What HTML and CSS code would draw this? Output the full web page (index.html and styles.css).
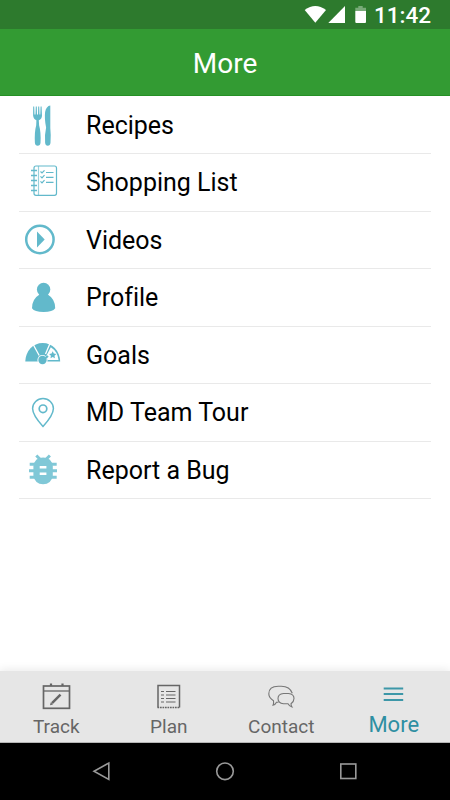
FILE: index.html
```html
<!DOCTYPE html>
<html lang="en">
<head>
<meta charset="utf-8">
<title>More</title>
<link rel="stylesheet" href="styles.css">
</head>
<body>
<div class="screen">
  <div class="status">
    <svg class="status-icons" viewBox="300 0 70 29" aria-hidden="true">
      <path d="M304.700 10Q315.300 2 326 10L315.300 22.700Z" fill="#fff"/>
      <path d="M345 6V23H328.300Z" fill="#fff"/>
      <path d="M358.300 6h4.400v1.700h3.300v3.300h-10.700V7.700h3z" fill="#78aa78"/>
      <path d="M355.300 11H366v11q0 1-1 1h-8.700q-1 0-1-1z" fill="#fff"/>
    </svg>
    <span class="clock">11:42</span>
  </div>
  <header class="title">More</header>
  <ul class="menu">
    <li class="row">
      <svg class="icon" viewBox="19 97 67 57" fill="#62b9cb">
        <path d="M33.200 106.500h1l.3 8h1l.3-8h1l.2 8h1l.2-8h1l.3 8h.8l.3-8h1l.4 9q0 3.500-3.200 4.700l.3 5q2 7 1.400 17.500-.2 3-2.800 3t-2.800-3q-.6-10.500 1.300-17.500l.2-5q-3-1.200-3.300-4.700z"/>
        <path d="M50.300 105.500v22.500q.8 7 .2 14.700-.3 3-2.700 3t-2.700-3q-.6-8 1-15.200-1.800-9-1-15.500 1.200-6 5.200-6.500z"/>
      </svg>
      <span class="label">Recipes</span>
    </li>
    <li class="row">
      <svg class="icon" viewBox="19 154 67 57" fill="none" stroke="#62b9cb" stroke-width="1.200">
        <rect x="34" y="166" width="22.500" height="29.300" rx="2"/>
        <path d="M38.500 166v29.300" opacity=".65"/>
        <path d="M31 170.500h6M31 175.500h6M31 180.500h6M31 185.500h6M31 190.500h6" stroke-width="1.400"/>
        <path d="M40.500 171.500l1.500 1.500 2.500-2.700M46 172.500h7.500M40.500 176.300l1.500 1.500 2.500-2.700M46 177.300h7.500M40.500 181.300l1.500 1.500 2.500-2.700M46 182.300h7.500"/>
      </svg>
      <span class="label">Shopping List</span>
    </li>
    <li class="row">
      <svg class="icon" viewBox="19 212 67 57">
        <circle cx="39.900" cy="239.500" r="13.700" fill="none" stroke="#62b9cb" stroke-width="2.500"/>
        <path d="M37 231.500l7.700 8-7.700 8z" fill="#62b9cb"/>
      </svg>
      <span class="label">Videos</span>
    </li>
    <li class="row">
      <svg class="icon" viewBox="19 269 67 57" fill="#62b9cb">
        <circle cx="43.600" cy="289.500" r="6.700"/>
        <path d="M39.500 294.500h8.200q7.500 4.500 7.500 13.700-2.500 3.800-11.600 3.800T32 308.200q0-9.200 7.500-13.700z"/>
      </svg>
      <span class="label">Profile</span>
    </li>
    <li class="row">
      <svg class="icon" viewBox="19 327 67 57">
        <path d="M25.300 361.500C25.500 351 33 343 42.700 343S60 351 60.200 361.500z" fill="#62b9cb"/>
        <path d="M46.500 355.500L50.800 347.300Q57.500 351.500 58.500 360H47.500z" fill="#fff"/>
        <path d="M33.200 344.500l6 11M50.200 343l-4.700 11" stroke="#fff" stroke-width="1.300"/>
        <path d="M52.700 351.300l1.100 2.300 2.500.3-1.800 1.800.4 2.500-2.200-1.200-2.200 1.200.4-2.500-1.800-1.800 2.500-.3z" fill="#62b9cb"/>
        <circle cx="42.500" cy="360" r="5.100" fill="#fff"/>
        <circle cx="42.500" cy="360" r="4.200" fill="#62b9cb"/>
        <path d="M43 360l5-4" stroke="#62b9cb" stroke-width="2.200"/>
      </svg>
      <span class="label">Goals</span>
    </li>
    <li class="row">
      <svg class="icon" viewBox="19 384 67 57" fill="none" stroke="#62b9cb">
        <path d="M43 426.500Q32.600 415 32.600 408.500a10.400 9.900 0 0 1 20.800 0Q53.400 415 43 426.500z" stroke-width="1.500"/>
        <circle cx="43" cy="408.800" r="3.800" stroke-width="1.700"/>
      </svg>
      <span class="label">MD Team Tour</span>
    </li>
    <li class="row">
      <svg class="icon" viewBox="19 442 67 57" fill="none" stroke="#80c8d7">
        <path d="M36.300 455.500l5 5M49.900 455.500l-5 5M29.700 464.200h27M29 470.700h28M29.700 477.200h27" stroke-width="3"/>
        <path d="M33.400 466.500q1-9 9.700-9t9.700 9v9q-1.500 8.800-9.700 8.800t-9.700-8.800z" fill="#80c8d7" stroke="none"/>
        <path d="M39.700 467.200h6.700M39.700 473.800h6.700" stroke="#fff" stroke-width="2.500"/>
      </svg>
      <span class="label">Report a Bug</span>
    </li>
  </ul>
  <nav class="tabs">
    <div class="tab">
      <svg class="tab-icon" viewBox="36 680 40 32" fill="none" stroke="#666">
        <rect x="43.500" y="686" width="26" height="22.300" stroke-width="1.700"/>
        <path d="M43 691h27" stroke-width="1.300"/>
        <path d="M51 683.500v2.500M62.500 683.500v2.500" stroke-width="2.200"/>
        <path d="M52 703.200L60.500 694.700" stroke-width="2.500"/>
        <path d="M50 705.200l.8-3 2.200 2.200z" fill="#666" stroke="none"/>
      </svg>
      <span>Track</span>
    </div>
    <div class="tab">
      <svg class="tab-icon" viewBox="149 680 40 32" fill="none" stroke="#666">
        <path d="M158 707.500V685.500h21.500v22" stroke-width="1.500"/>
        <path d="M157.500 707.500h22.500" stroke-width="1.300" stroke-dasharray="1.700 .8"/>
        <path d="M161 691.500h3M166 691.500h9.500M161 695h3M166 695h9.500M161 698.500h3M166 698.500h9.500M161 702h3M166 702h9.500" stroke-width="1.100"/>
      </svg>
      <span>Plan</span>
    </div>
    <div class="tab">
      <svg class="tab-icon" viewBox="261 680 40 32" fill="none" stroke="#777" stroke-width="1.100">
        <path d="M278.500 702.300H276.500q-1.500 3-3.500 3 1-1.500.5-4.500-4.700-3-4.700-7 0-7.500 9.500-7.500h3q8.500 0 11 7"/>
        <path d="M283.500 693.500h5q5.500.5 5.500 5 0 3-3 5.200 0 1.800 1 3.300-2.500-.5-4-3.200h-4.500q-5.500-.8-5.500-5.300 0-4.500 5.500-5z"/>
      </svg>
      <span>Contact</span>
    </div>
    <div class="tab active">
      <svg class="tab-icon" viewBox="373.500 680 40 32" fill="none" stroke="#3d97a8" stroke-width="2">
        <path d="M383.200 688.500H402.700M383.200 694H402.700M383.200 700H402.700"/>
      </svg>
      <span>More</span>
    </div>
  </nav>
  <div class="system">
    <svg viewBox="0 743 450 57" fill="none" stroke="#999" stroke-width="1.600">
      <path d="M108.800 763v16.500L94 771.300z"/>
      <circle cx="225" cy="771.300" r="8.300"/>
      <rect x="340.800" y="764" width="15" height="14.500"/>
    </svg>
  </div>
</div>
</body>
</html>
```
FILE: styles.css
```css
* { box-sizing: border-box; }
body {
  margin: 0;
  font-family: Roboto, "Liberation Sans", sans-serif;
  background: #fff;
}
.screen {
  width: 450px;
  height: 800px;
  display: flex;
  flex-direction: column;
  background: #fff;
  overflow: hidden;
}
.status {
  flex: none;
  height: 29px;
  padding-right: 19px;
  display: flex;
  justify-content: flex-end;
  background: #2d7a2d;
  color: #fff;
}
.status-icons { width: 70px; height: 29px; }
.clock {
  width: 61px;
  padding-left: 4px;
  font-size: 22.5px;
  font-weight: 500;
  line-height: 31px;
  white-space: nowrap;
}
.title {
  flex: none;
  height: 67px;
  background: #339b33;
  border-bottom: 1px solid #259025;
  color: #fff;
  font-size: 28px;
  line-height: 69px;
  text-align: center;
}
.menu {
  flex: 1;
  margin: 0;
  padding: .5px 19px 0;
  list-style: none;
}
.row {
  height: 57.5px;
  display: flex;
  align-items: flex-start;
  border-bottom: 1px solid #e9e9e9;
}
.icon { flex: none; width: 67px; height: 57px; }
.label {
  font-size: 25px;
  line-height: 57.800px;
  color: #000;
  font-variant-ligatures: none;
}
.tabs {
  flex: none;
  height: 72px;
  display: grid;
  grid-template-columns: repeat(4, 1fr);
  background: #e6e6e6;
  border-bottom: 1px solid #b5b5b5;
  box-shadow: 0 -2px 8px rgba(0, 0, 0, .08);
}
.tab {
  display: flex;
  flex-direction: column;
  align-items: center;
  padding-top: 9px;
  color: #666;
  font-size: 19px;
  line-height: 30px;
}
.tab-icon { width: 40px; height: 32px; flex: none; }
.active {
  color: #2e8fa2;
  font-size: 22px;
  line-height: 25px;
}
.system { flex: none; height: 57px; background: #000; }
.system svg { display: block; width: 450px; height: 57px; }
```
